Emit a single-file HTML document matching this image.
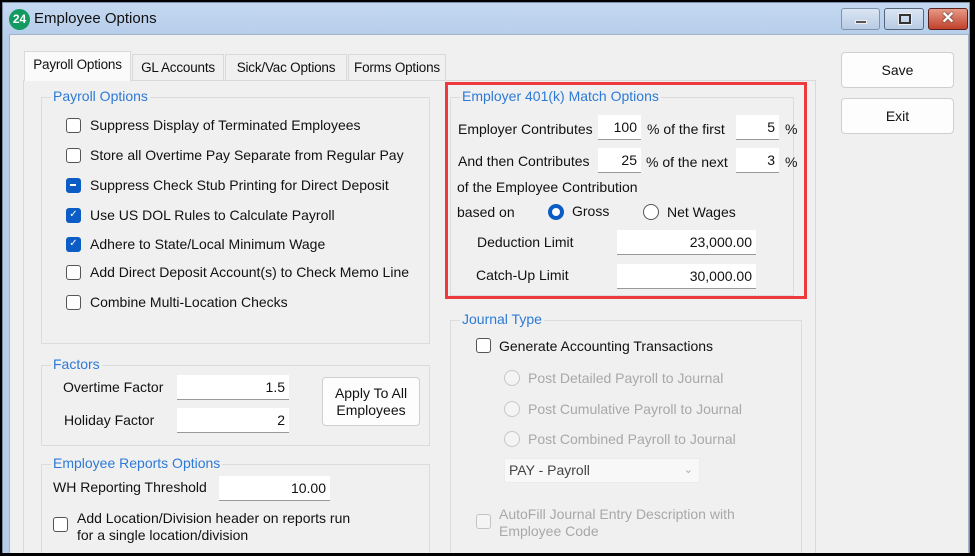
<!DOCTYPE html>
<html><head><meta charset="utf-8"><style>
*{box-sizing:border-box;margin:0;padding:0}
html,body{width:975px;height:556px;overflow:hidden}
body{background:#000;font-family:"Liberation Sans",sans-serif;font-size:14px;color:#111;position:relative}
#r{position:absolute;left:0;top:0;width:975px;height:556px;overflow:hidden}
.win{position:absolute;left:2px;top:2px;width:968px;height:560px;background:linear-gradient(#c4d8f0,#b6cdea 34px);border:1px solid #7a8ea8}
.a{position:absolute;white-space:nowrap}
.grp{position:absolute;border:1px solid #dcdcdc}
.lg{position:absolute;color:#2d7ad6;background:#f0f0f0;padding:0 2px;font-size:14px;top:-10px;left:9px}
.cb{position:absolute;width:15px;height:15px;border:1.5px solid #555;border-radius:3px;background:#fff}
.cb.on{background:#0b5cc4;border-color:#0b5cc4}
.cb.dis{border-color:#c4c4c4;background:#f4f4f4}
.tb{position:absolute;background:#fff;border-bottom:1.5px solid #999;text-align:right;padding-right:4px;line-height:24px;height:25px}
.rd{position:absolute;width:16px;height:16px;border-radius:50%;border:1.5px solid #555;background:#fff}
.rd.dis{border-color:#c8c8c8;background:#f4f4f4}
.btn{position:absolute;background:#fdfdfd;border:1px solid #cfcfcf;border-radius:4px;text-align:center}
.dim{color:#a8a8a8}
.tab{position:absolute;border:1px solid #d9d9d9;border-bottom:none;background:#f0f0f0;text-align:center;line-height:26px;font-size:13.5px;letter-spacing:-0.2px}
</style></head><body><div id="r">
<div class="win"></div>
<div class="a" style="left:9px;top:9px;width:21px;height:21px;border-radius:50%;background:#139a60;color:#fff;font-weight:bold;font-size:12px;text-align:center;line-height:21px">24</div>
<div class="a" style="left:34px;top:10px;font-size:15px">Employee Options</div>
<div class="a" style="left:841px;top:8px;width:39px;height:22px;border:1px solid #7f93ad;border-radius:3px;background:linear-gradient(#dbe6f4,#b8cbe3)"><div class="a" style="left:13px;top:11px;width:12px;height:4px;background:#555;border:1px solid #eee"></div></div>
<div class="a" style="left:884px;top:8px;width:40px;height:22px;border:1px solid #55657b;border-radius:3px;background:linear-gradient(#dbe6f4,#b8cbe3)"><div class="a" style="left:14px;top:5px;width:12px;height:10px;border:2px solid #333;box-shadow:0 0 0 1px #eee"></div></div>
<div class="a" style="left:928px;top:8px;width:40px;height:22px;border:1px solid #5a2020;border-radius:3px;background:linear-gradient(#e79a86,#c0412b);color:#fff;font-weight:bold;text-align:center;line-height:20px;font-size:16px;text-shadow:0 0 2px #333">✕</div>
<div class="a" style="left:9px;top:34px;width:960px;height:530px;background:#f0f0f0;border:1px solid #9fb3cc"></div>
<div class="a" style="left:23px;top:80px;width:793px;height:490px;border:1px solid #d9d9d9;background:#f0f0f0"></div>
<div class="tab" style="left:24px;top:51px;width:107px;height:30px;background:#fafafa">Payroll Options</div>
<div class="tab" style="left:132px;top:54px;width:92px;height:26px">GL Accounts</div>
<div class="tab" style="left:225px;top:54px;width:122px;height:26px">Sick/Vac Options</div>
<div class="tab" style="left:348px;top:54px;width:98px;height:26px">Forms Options</div>
<div class="grp" style="left:41px;top:97px;width:389px;height:247px"><span class="lg">Payroll Options</span></div>
<div class="cb" style="left:66px;top:118px"></div><div class="a" style="left:90px;top:117px">Suppress Display of Terminated Employees</div>
<div class="cb" style="left:66px;top:148px"></div><div class="a" style="left:90px;top:147px">Store all Overtime Pay Separate from Regular Pay</div>
<div class="cb on" style="left:66px;top:178px"><div class="a" style="left:3px;top:5px;width:6px;height:2px;background:#fff"></div></div><div class="a" style="left:90px;top:177px">Suppress Check Stub Printing for Direct Deposit</div>
<div class="cb on" style="left:66px;top:208px;color:#fff;font-size:10px;line-height:12px;text-align:center">✓</div><div class="a" style="left:90px;top:207px">Use US DOL Rules to Calculate Payroll</div>
<div class="cb on" style="left:66px;top:237px;color:#fff;font-size:10px;line-height:12px;text-align:center">✓</div><div class="a" style="left:90px;top:236px">Adhere to State/Local Minimum Wage</div>
<div class="cb" style="left:66px;top:265px"></div><div class="a" style="left:90px;top:264px">Add Direct Deposit Account(s) to Check Memo Line</div>
<div class="cb" style="left:66px;top:295px"></div><div class="a" style="left:90px;top:294px">Combine Multi-Location Checks</div>
<div class="grp" style="left:41px;top:365px;width:389px;height:81px"><span class="lg">Factors</span></div>
<div class="a" style="left:63px;top:379px">Overtime Factor</div>
<div class="tb" style="left:177px;top:375px;width:112px">1.5</div>
<div class="a" style="left:64px;top:412px">Holiday Factor</div>
<div class="tb" style="left:177px;top:408px;width:112px">2</div>
<div class="btn" style="left:322px;top:377px;width:98px;height:49px;line-height:17px;padding-top:7px">Apply To All<br>Employees</div>
<div class="grp" style="left:41px;top:464px;width:389px;height:110px"><span class="lg">Employee Reports Options</span></div>
<div class="a" style="left:53px;top:479px">WH Reporting Threshold</div>
<div class="tb" style="left:219px;top:476px;width:111px">10.00</div>
<div class="cb" style="left:53px;top:517px"></div>
<div class="a" style="left:77px;top:510px;line-height:17px">Add Location/Division header on reports run<br>for a single location/division</div>
<div class="a" style="left:445px;top:82px;width:362px;height:217px;border:3px solid #ec3a3f"></div>
<div class="grp" style="left:450px;top:97px;width:344px;height:199px"><span class="lg">Employer 401(k) Match Options</span></div>
<div class="a" style="left:458px;top:121px">Employer Contributes</div>
<div class="tb" style="left:598px;top:115px;width:43px">100</div>
<div class="a" style="left:647px;top:121px">% of the first</div>
<div class="tb" style="left:736px;top:115px;width:43px">5</div>
<div class="a" style="left:785px;top:121px">%</div>
<div class="a" style="left:458px;top:153px">And then Contributes</div>
<div class="tb" style="left:598px;top:148px;width:43px">25</div>
<div class="a" style="left:646px;top:154px">% of the next</div>
<div class="tb" style="left:736px;top:148px;width:43px">3</div>
<div class="a" style="left:785px;top:154px">%</div>
<div class="a" style="left:457px;top:179px">of the Employee Contribution</div>
<div class="a" style="left:457px;top:204px">based on</div>
<div class="rd" style="left:548px;top:204px;border:4px solid #0b5cc4"></div>
<div class="a" style="left:572px;top:203px">Gross</div>
<div class="rd" style="left:643px;top:204px"></div>
<div class="a" style="left:667px;top:204px">Net Wages</div>
<div class="a" style="left:477px;top:234px">Deduction Limit</div>
<div class="tb" style="left:617px;top:230px;width:139px">23,000.00</div>
<div class="a" style="left:476px;top:267px">Catch-Up Limit</div>
<div class="tb" style="left:617px;top:264px;width:139px">30,000.00</div>
<div class="grp" style="left:450px;top:320px;width:352px;height:255px"><span class="lg">Journal Type</span></div>
<div class="cb" style="left:476px;top:338px"></div><div class="a" style="left:499px;top:338px">Generate Accounting Transactions</div>
<div class="rd dis" style="left:504px;top:370px"></div><div class="a dim" style="left:528px;top:370px">Post Detailed Payroll to Journal</div>
<div class="rd dis" style="left:504px;top:401px"></div><div class="a dim" style="left:528px;top:401px">Post Cumulative Payroll to Journal</div>
<div class="rd dis" style="left:504px;top:431px"></div><div class="a dim" style="left:528px;top:431px">Post Combined Payroll to Journal</div>
<div class="a" style="left:504px;top:458px;width:196px;height:25px;background:#f8f8f8;border:1px solid #ececec;padding-left:4px;line-height:23px;color:#444">PAY - Payroll<span style="position:absolute;right:6px;top:0;color:#aaa;font-size:11px">&#8964;</span></div>
<div class="cb dis" style="left:476px;top:514px"></div>
<div class="a dim" style="left:499px;top:506px;line-height:17px">AutoFill Journal Entry Description with<br>Employee Code</div>
<div class="btn" style="left:841px;top:52px;width:113px;height:36px;line-height:34px">Save</div>
<div class="btn" style="left:841px;top:98px;width:113px;height:36px;line-height:34px">Exit</div>
<div class="a" style="left:0;top:553px;width:975px;height:3px;background:#000"></div>
<div class="a" style="left:971px;top:0;width:4px;height:556px;background:#000"></div>
</div></body></html>
